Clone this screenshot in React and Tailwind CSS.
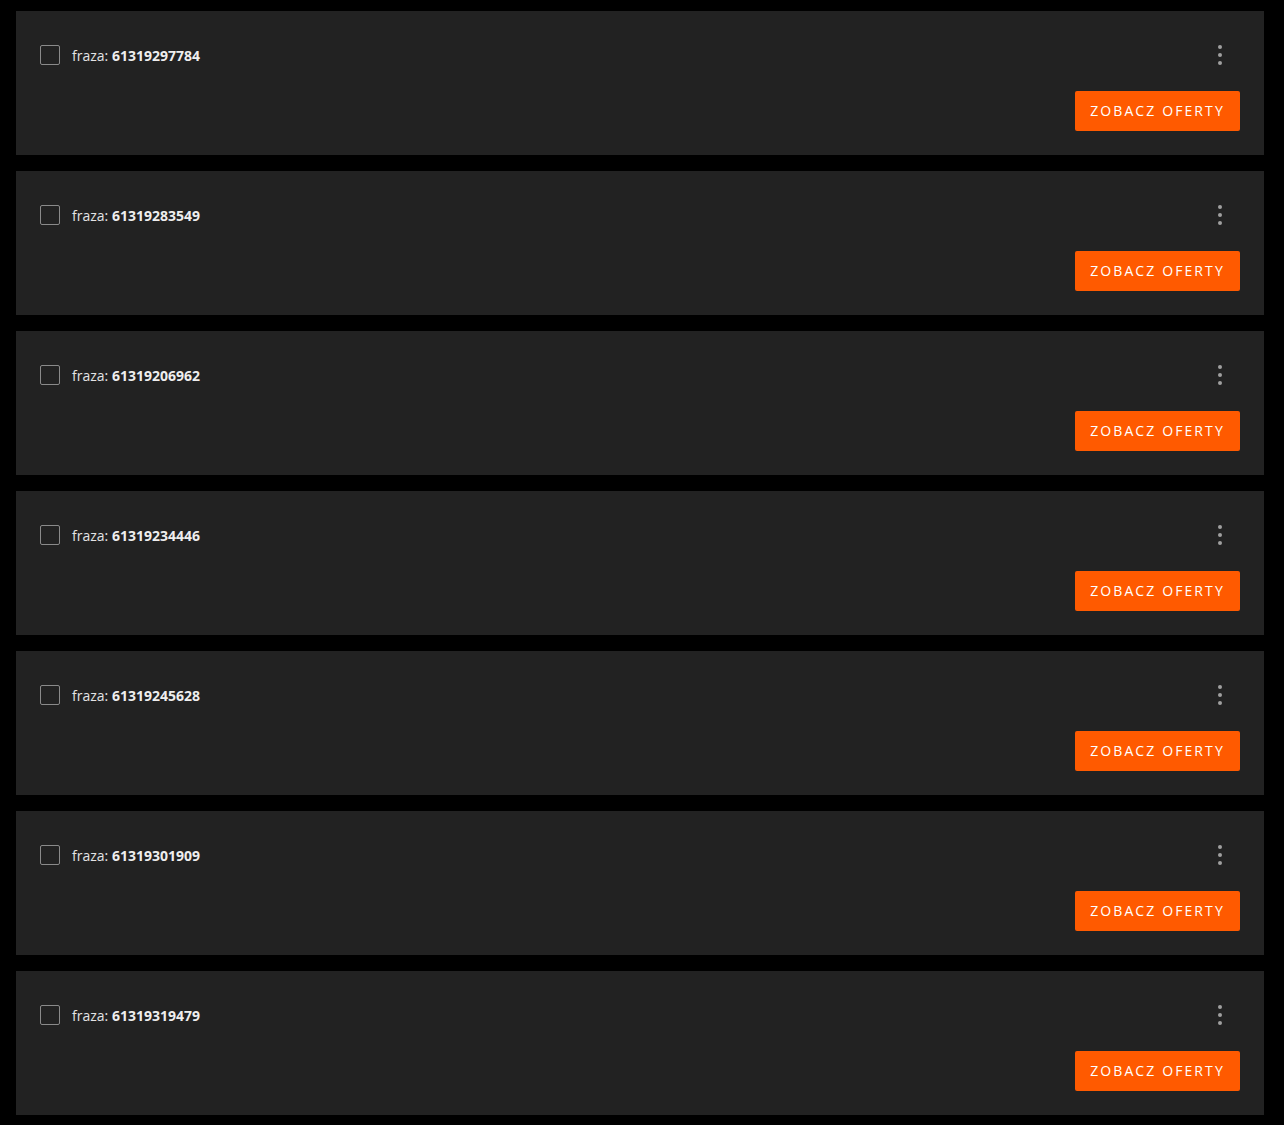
import React from 'react';

const phrases = [
  '61319297784',
  '61319283549',
  '61319206962',
  '61319234446',
  '61319245628',
  '61319301909',
  '61319319479',
];

const PhraseCard = ({ phrase }) => (
  <div className="bg-[#222222] px-6 pt-6 pb-6">
    <div className="flex items-center h-10">
      <div className="w-5 h-5 border border-[#8a8a8a] rounded-[2px] mr-3" />
      <span className="text-[14px] text-[#e4e4e4]">
        fraza: <b className="font-bold text-[#eeeeee]">{phrase}</b>
      </span>
      <button className="ml-auto mr-[14px] flex flex-col items-center gap-1 p-1">
        <span className="w-1 h-1 rounded-full bg-[#a0a0a0]" />
        <span className="w-1 h-1 rounded-full bg-[#a0a0a0]" />
        <span className="w-1 h-1 rounded-full bg-[#a0a0a0]" />
      </button>
    </div>
    <div className="flex justify-end mt-4">
      <button className="w-[165px] h-10 bg-[#ff5a00] rounded-[2px] text-white text-[14px] leading-none pb-px tracking-[2.1px] uppercase">
        Zobacz oferty
      </button>
    </div>
  </div>
);

const App = () => {
  return (
    <div className="bg-black min-h-screen pl-4 pr-5 pt-[11px] pb-[10px] font-['Open_Sans',sans-serif]">
      <div className="flex flex-col gap-4">
        {phrases.map(p => (
          <PhraseCard key={p} phrase={p} />
        ))}
      </div>
    </div>
  );
};

export default App;
